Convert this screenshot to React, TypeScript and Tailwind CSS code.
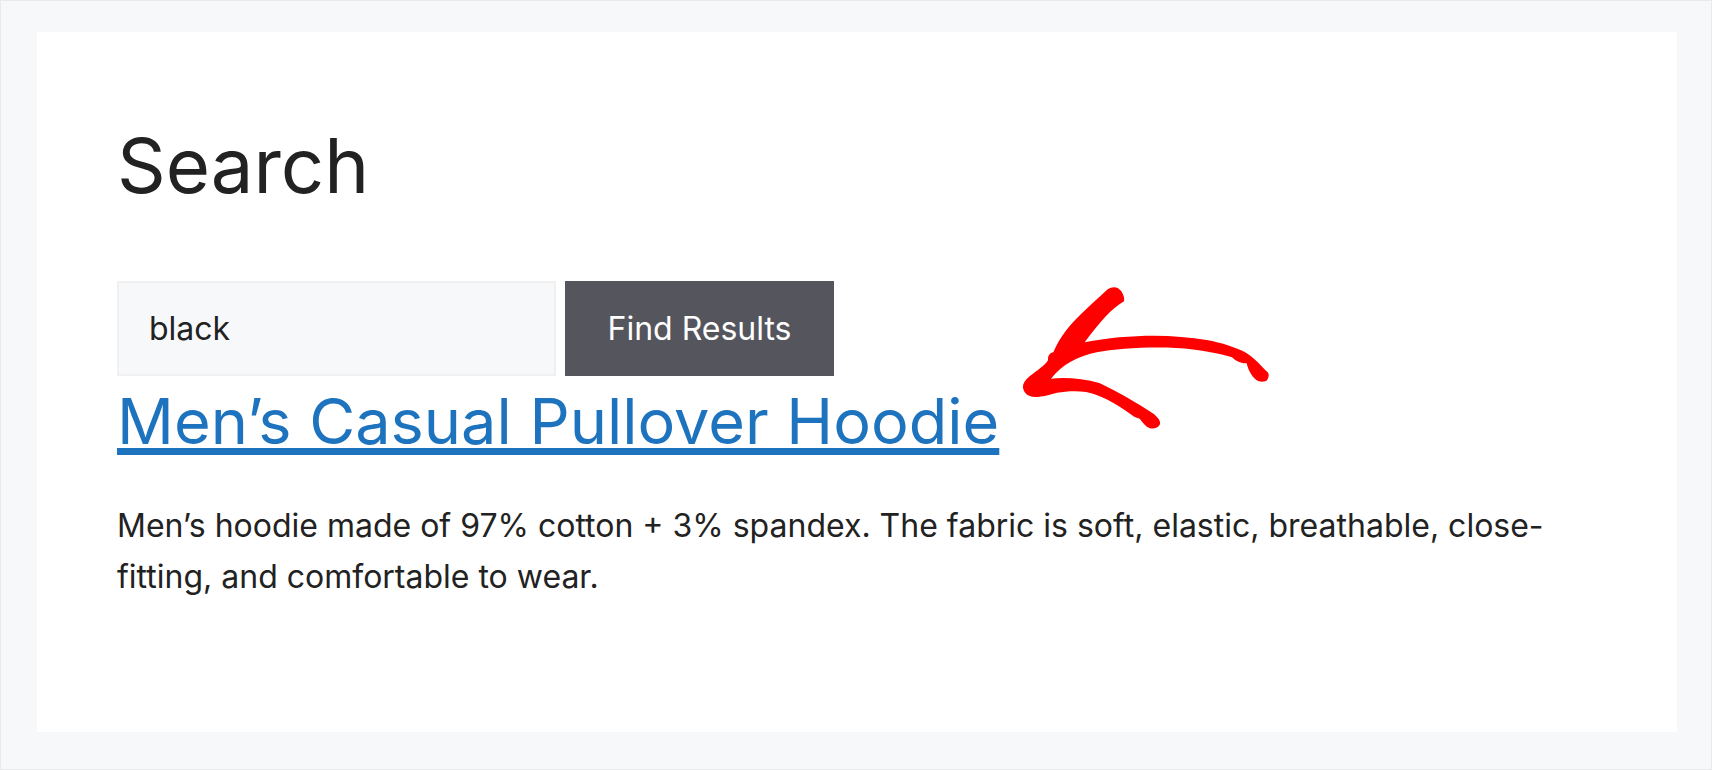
import React, { useState } from "react";

const results = [
  {
    title: "Men’s Casual Pullover Hoodie",
    excerpt:
      "Men’s hoodie made of 97% cotton + 3% spandex. The fabric is soft, elastic, breathable, close-fitting, and comfortable to wear.",
  },
];

const Arrow = () => {
  return (
    <svg
      viewBox="0 0 870 510"
      className="pointer-events-none absolute left-full -top-[106px] ml-px w-[290px] h-[170px] text-[#ff0000]"
      fill="currentColor"
      aria-hidden="true"
    >
      <path d="M323 58C338 47 356 51 364 64C371 75 374 85 372 94C335 115 301 154 254 217C320 203 395 197 462 197C518 197 572 202 620 210C665 218 710 233 738 248C762 263 785 288 803 307C808 313 807 321 802 329C797 336 784 336 774 333C759 326 745 303 740 280C722 281 708 273 696 262C655 250 600 238 528 234C450 230 350 235 290 247C230 260 188 283 153 326C195 322 250 325 298 339C355 366 410 398 458 430C476 443 482 455 480 463C474 475 462 477 450 475C438 471 430 460 419 446C407 444 398 438 388 430C345 399 300 374 258 366C228 361 196 364 171 368C150 375 125 380 108 381C82 382 67 364 69 347C72 333 84 322 98 312C118 297 140 281 144 270C143 258 150 248 160 247C178 202 210 164 244 131C270 106 298 82 323 58Z" />
    </svg>
  );
};

const SearchForm = () => {
  const [query, setQuery] = useState("black");

  return (
    <form
      className="flex flex-wrap gap-[9px] text-[32px]"
      onSubmit={(e) => e.preventDefault()}
    >
      <input
        type="text"
        aria-label="Search"
        value={query}
        onChange={(e) => setQuery(e.target.value)}
        className="h-[95px] w-[439px] max-w-full border-2 border-[#f0f0f0] bg-[#f7f8fa] px-[30px] outline-none"
      />
      <button
        type="submit"
        className="h-[95px] w-[269px] bg-[#55555e] text-white"
      >
        Find Results
      </button>
    </form>
  );
};

const App = () => {
  return (
    <div className="min-h-screen border border-[#e9eaec] bg-[#f7f8fa] pt-[31px] pr-[34px] pb-9 pl-9 font-['Inter',sans-serif] text-[#222222]">
      <main className="bg-white px-20 pt-20 pb-[130px]">
        <h1 className="text-[76px] leading-[106px] mb-[63px]">Search</h1>
        <SearchForm />
        {results.map((item) => (
          <article key={item.title}>
            <h2 className="text-[63px] leading-[90px] mb-[34px]">
              <a
                href="#"
                className="relative inline-block text-[#1e73be] underline decoration-[7px] underline-offset-[4px] [text-decoration-skip-ink:none]"
              >
                {item.title}
                <Arrow />
              </a>
            </h2>
            <p className="text-[32px] leading-[51px]">{item.excerpt}</p>
          </article>
        ))}
      </main>
    </div>
  );
};

export default App;
